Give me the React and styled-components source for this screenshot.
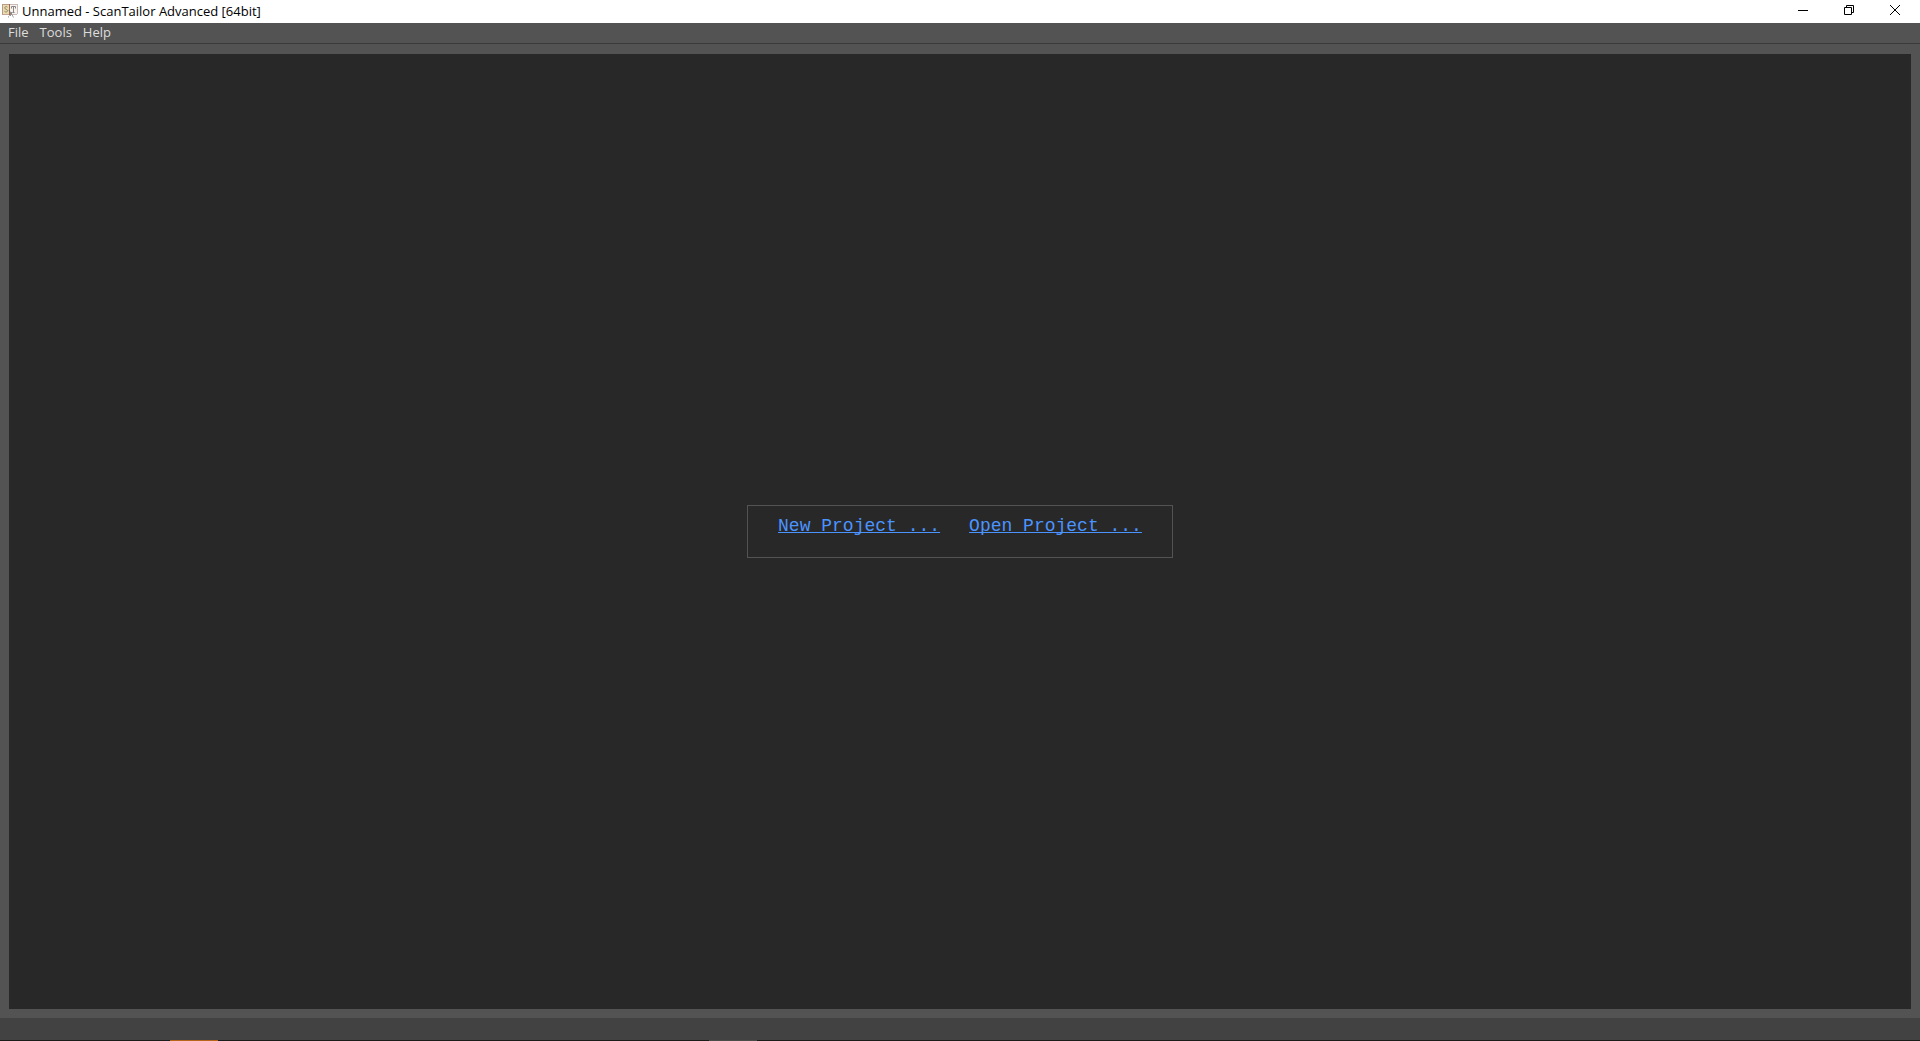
import styled, {createGlobalStyle} from 'styled-components';

const GlobalStyle = createGlobalStyle`
  * {
    box-sizing: border-box;
  }

  body {
    margin: 0;
    background: #535353;
    font-family: 'Open Sans', 'Noto Sans', sans-serif;
    font-size: 13px;
  }
`;

const Window = styled.div`
  display: flex;
  flex-direction: column;
  min-height: 100vh;
`;

const TitleBar = styled.header`
  display: flex;
  align-items: center;
  height: 23px;
  padding: 0 2px;
  background: #ffffff;
  color: #000000;
`;

const Title = styled.h1`
  flex: 1;
  margin: 0 0 0 4px;
  font-size: 13px;
  font-weight: 400;
  line-height: 23px;
`;

const WindowButton = styled.button`
  display: flex;
  align-items: center;
  align-self: flex-start;
  justify-content: center;
  width: 46px;
  height: 20px;
  padding: 0;
  border: 0;
  background: transparent;
  color: #000000;

  &:hover {
    background: ${(props) => (props.$danger ? '#e81123' : '#e5e5e5')};
  }
`;

const MenuBar = styled.nav`
  display: flex;
  align-items: flex-start;
  gap: 11px;
  height: 21px;
  padding-left: 8px;
  border-bottom: 1px solid #3a3a3a;
  background: #535353;
`;

const MenuButton = styled.button`
  padding: 0;
  border: 0;
  background: transparent;
  color: #dddddd;
  font-family: inherit;
  font-size: 13px;
  line-height: 18px;
`;

const Main = styled.main`
  display: flex;
  flex: 1;
  padding: 10px 9px 9px;
`;

const Workspace = styled.section`
  display: flex;
  flex: 1;
  align-items: center;
  justify-content: center;
  background: #282828;
`;

const StartPanel = styled.div`
  display: flex;
  gap: 29px;
  padding: 8px 30px 19px;
  border: 1px solid #535353;
`;

const StartLink = styled.a`
  color: #4b94ff;
  font-family: 'Liberation Mono', monospace;
  font-size: 18px;
  line-height: 24px;
  text-decoration-thickness: 1px;
  text-underline-offset: 1px;
  text-decoration-skip-ink: none;
`;

const StatusBar = styled.footer`
  height: 22px;
  background: #424242;
`;

const TaskStrip = styled.div`
  display: flex;
  height: 1px;
  padding-left: 170px;
  gap: 491px;
  background: #1c1c1c;
`;

const TaskMark = styled.span`
  width: 48px;
  background: ${(props) => (props.$active ? '#b8651b' : '#4c4c4c')};
`;

const AppIcon = () => (
  <svg width="16" height="16" viewBox="0 0 16 16" aria-hidden="true">
    <path d="M0 0h7v10H0z" fill="#ecdca9" />
    <path d="M8 0h7v10H8z" fill="#f6f2f0" />
    <path d="M.5 0v11M0 .5h7" fill="none" stroke="#b99a8c" />
    <path d="M8 .5h7M15.5 0v10M10 10.5h5" fill="none" stroke="#cbbcb8" />
    <path d="M1 10.5h6" stroke="#c4a79a" />
    <path d="M7.5 0v11" stroke="#a3655a" />
    <path d="M5.5 3.2C4.4 2 2.6 2.6 2.7 4c.1 1.6 2.9 1 2.8 2.8C5.4 8.3 3.4 8.3 2.4 7.2" fill="none" stroke="#8f8a72" />
    <path d="M9.5 4.5v-2h4v2M11.5 2.5v6M10.5 8.5h2" fill="none" stroke="#8a8782" />
    <path d="M7 6l2.5 5M10 8l-2 4" fill="none" stroke="#77716d" />
    <path d="M6.5 13.5v-1l1-1M10 10.5l1.5 3" fill="none" stroke="#a5a09c" />
  </svg>
);

const MinimizeIcon = () => (
  <svg width="10" height="10" viewBox="0 0 10 10" aria-hidden="true">
    <path d="M0 5.5h10" stroke="currentColor" />
  </svg>
);

const RestoreIcon = () => (
  <svg width="10" height="10" viewBox="0 0 10 10" fill="none" stroke="currentColor" aria-hidden="true">
    <path d="M.5 2.5h7v7h-7zM2.5 2.5v-2h7v7h-2" />
  </svg>
);

const CloseIcon = () => (
  <svg width="10" height="10" viewBox="0 0 10 10" stroke="currentColor" aria-hidden="true">
    <path d="M0 0l10 10M10 0L0 10" />
  </svg>
);

const menus = ['File', 'Tools', 'Help'];

const App = () => {
  return (
    <>
      <GlobalStyle />
      <Window>
        <TitleBar>
          <AppIcon />
          <Title>Unnamed - ScanTailor Advanced [64bit]</Title>
          <WindowButton aria-label="Minimize">
            <MinimizeIcon />
          </WindowButton>
          <WindowButton aria-label="Restore">
            <RestoreIcon />
          </WindowButton>
          <WindowButton aria-label="Close" $danger>
            <CloseIcon />
          </WindowButton>
        </TitleBar>
        <MenuBar>
          {menus.map((menu) => (
            <MenuButton key={menu}>{menu}</MenuButton>
          ))}
        </MenuBar>
        <Main>
          <Workspace>
            <StartPanel>
              <StartLink href="#new">New Project ...</StartLink>
              <StartLink href="#open">Open Project ...</StartLink>
            </StartPanel>
          </Workspace>
        </Main>
        <StatusBar />
        <TaskStrip>
          <TaskMark $active />
          <TaskMark />
        </TaskStrip>
      </Window>
    </>
  );
};

export default App;
